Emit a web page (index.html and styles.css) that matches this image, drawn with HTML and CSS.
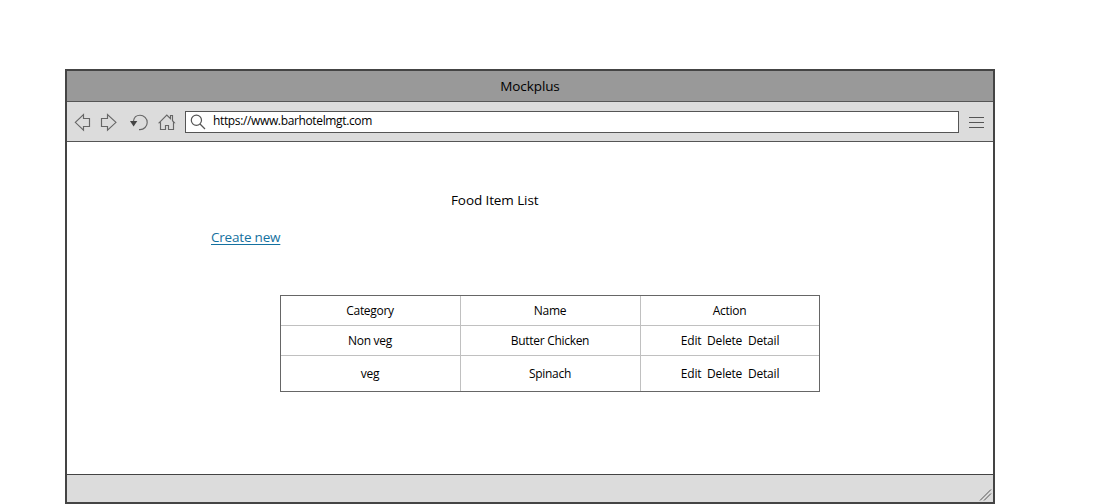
FILE: index.html
```html
<!DOCTYPE html>
<html lang="en">
<head>
<meta charset="utf-8">
<title>Food Item List</title>
<link rel="stylesheet" href="styles.css">
</head>
<body>
<div class="browser">
  <header class="titlebar"><span class="title">Mockplus</span></header>
  <nav class="toolbar">
    <svg class="nav-icons" width="110" height="39" viewBox="67 102 110 39">
      <path d="M75.3 122.3 83.5 114.5V118.5H89.5V126.5H83.5V130.1Z"/>
      <path d="M116 122.3 107.5 114.5V118.5H101.5V126.5H107.5V130.1Z"/>
      <path d="M133.5 121C134 117.3 136.5 115.2 140 115.2A7.2 7.2 0 0 1 140 129.6H139"/>
      <path class="solid" d="M130 121H137.3L133.6 126.5Z"/>
      <path d="M159.3 122.7 166.8 115 170.5 118.7V115.5H172.5V120.7L174.3 122.7H173.5V129.5H168.5V125.5H165.5V129.5H160.5V122.7Z"/>
    </svg>
    <div class="address">
      <svg class="search" width="16" height="16" viewBox="190 114 16 16">
        <circle cx="196.4" cy="120.3" r="5.1"/><path d="M200 124 205 129"/>
      </svg>
      <span class="url">https://www.barhotelmgt.com</span>
    </div>
    <div class="menu"><i></i><i></i><i></i></div>
  </nav>
  <main class="content">
    <h1 class="heading">Food Item List</h1>
    <a class="create">Create new</a>
    <div class="table">
      <div class="cell">Category</div><div class="cell">Name</div><div class="cell">Action</div>
      <div class="cell">Non veg</div><div class="cell">Butter Chicken</div><div class="cell actions">Edit&nbsp; Delete&nbsp; Detail</div>
      <div class="cell">veg</div><div class="cell">Spinach</div><div class="cell actions">Edit&nbsp; Delete&nbsp; Detail</div>
    </div>
  </main>
  <footer class="status">
    <svg width="13" height="13" viewBox="0 0 13 13"><path d="M1 12.5 12 1.5M5 12.5 12 5.5"/></svg>
  </footer>
</div>
</body>
</html>
```
FILE: styles.css
```css
* { box-sizing: border-box; }
body { margin: 0; padding: 69px 0 0 65px; height: 504px; overflow: hidden; background: #fff; color: #000; font-family: "Open Sans", "Noto Sans", sans-serif; }
.browser { width: 930px; height: 435px; border: 2px solid #444; display: flex; flex-direction: column; }
.titlebar { height: 31px; background: #999; border-bottom: 1px solid #555; display: flex; justify-content: center; font-size: 13.5px; line-height: 31px; }
.title { letter-spacing: -.1px; }
.toolbar { height: 40px; background: #dcdcdc; border-bottom: 1px solid #555; display: flex; align-items: center; }
.nav-icons { flex: none; fill: none; stroke: #666; stroke-width: 1.15; }
.solid { fill: #444; stroke: none; }
.address { width: 774px; height: 22px; margin-left: 8px; background: #fff; border: 1px solid #555; display: flex; align-items: center; padding-left: 4px; }
.search { fill: none; stroke: #555; stroke-width: 1.2; }
.url { margin: -1px 0 0 7px; font-size: 12px; letter-spacing: -.36px; line-height: 18px; }
.menu { display: flex; flex-direction: column; gap: 4px; margin: 1px 0 0 10px; width: 15px; }
.menu i { height: 1px; background: #555; }
.content { flex: 1; display: flex; flex-direction: column; }
.heading { margin: 48px 0 0 384px; font-size: 13.5px; letter-spacing: -.1px; line-height: 20px; font-weight: 400; }
.create { margin: 17px 0 0 144px; align-self: flex-start; font-size: 13.5px; letter-spacing: -.2px; line-height: 20px; color: #1471a0; text-decoration: underline; text-underline-offset: 2px; text-decoration-thickness: 1px; }
.table { width: 540px; height: 97px; margin: 48px 0 0 213px; border: 1px solid #666; background: #c0c0c0; display: grid; grid-template-columns: 179px 179px 178px; grid-template-rows: 29px 29px 35px; gap: 1px; font-size: 12px; letter-spacing: -.3px; }
.cell { background: #fff; display: flex; align-items: center; justify-content: center; white-space: nowrap; padding-right: 1px; }
.actions { letter-spacing: -.2px; padding-right: 0; }
.status { height: 28px; background: #dcdcdc; border-top: 1px solid #444; display: flex; justify-content: flex-end; align-items: flex-end; padding: 0 1px 1px 0; }
.status svg { fill: none; stroke: #555; stroke-width: 1; }
```
